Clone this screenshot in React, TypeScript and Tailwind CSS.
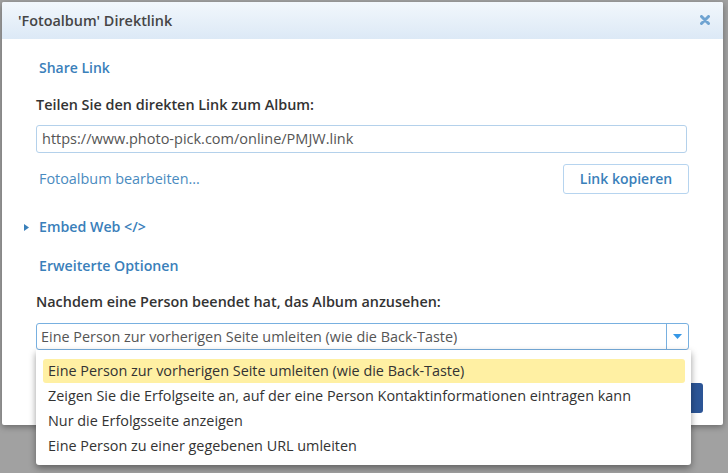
import React from "react";

export default function App() {
  const options = [
    "Eine Person zur vorherigen Seite umleiten (wie die Back-Taste)",
    "Zeigen Sie die Erfolgseite an, auf der eine Person Kontaktinformationen eintragen kann",
    "Nur die Erfolgsseite anzeigen",
    "Eine Person zu einer gegebenen URL umleiten",
  ];
  return (
    <div
      className="w-[728px] h-[473px] bg-[#a1a1a1] overflow-hidden pt-[2px] pl-[2px]"
      style={{ fontFamily: '"Open Sans", "Liberation Sans", sans-serif' }}
    >
      <div className="w-[721px] h-[423px] bg-white rounded-[2px] shadow-[0_2px_6px_rgba(0,0,0,0.35)] flex flex-col">
        <div className="h-[37px] shrink-0 bg-gradient-to-b from-[#f2f7fc] to-[#dce9f6] flex items-center justify-between pl-[16px] pr-[13px] rounded-t-[2px]">
          <span className="text-[14.4px] font-semibold text-[#454545] leading-[20px]">'Fotoalbum' Direktlink</span>
          <svg width="10" height="10" viewBox="0 0 10 10" className="mb-[2px]">
            <path d="M1.5 1.5 L8.5 8.5 M8.5 1.5 L1.5 8.5" stroke="#6fa3d1" strokeWidth="3" strokeLinecap="round" />
          </svg>
        </div>
        <div className="flex flex-col pl-[34px] pr-[34px] text-[14.4px] leading-[20px]">
          <div className="mt-[19px] pl-[3px] text-[14px] font-semibold text-[#3a80ba]">Share Link</div>
          <div className="mt-[17px] font-semibold text-[#333]">Teilen Sie den direkten Link zum Album:</div>
          <div className="mt-[10px] w-[651px] h-[28px] border border-[#b4d1eb] rounded-[3px] flex items-center pl-[5px] text-[14.5px] text-[#555]">
            https://www.photo-pick.com/online/PMJW.link
          </div>
          <div className="mt-[11px] w-[653px] flex items-center justify-between">
            <span className="pl-[3px] text-[#4a8bc0]">Fotoalbum bearbeiten...</span>
            <div className="w-[126px] h-[30px] border border-[#b6d4ef] rounded-[3px] flex items-center justify-center text-[14px] font-semibold text-[#3a80ba]">
              Link kopieren
            </div>
          </div>
          <div className="mt-[23px] flex items-center -ml-[12px]">
            <svg width="5" height="7" viewBox="0 0 5 7" className="mr-[10px]">
              <path d="M0 0 L5 3.5 L0 7 Z" fill="#3a80ba" />
            </svg>
            <span className="text-[14.2px] font-semibold text-[#3a80ba]">Embed Web &lt;/&gt;</span>
          </div>
          <div className="mt-[19px] pl-[3px] text-[14.2px] font-semibold text-[#3a80ba]">Erweiterte Optionen</div>
          <div className="mt-[16px] font-semibold text-[#333]">Nachdem eine Person beendet hat, das Album anzusehen:</div>
          <div className="relative mt-[11px] w-[653px]">
            <div className="h-[27px] border border-[#78b0e0] rounded-[3px] flex items-stretch text-[#555]">
              <div className="flex-1 flex items-center pl-[4px]">
                Eine Person zur vorherigen Seite umleiten (wie die Back-Taste)
              </div>
              <div className="w-[22px] border-l border-[#78b0e0] flex items-center justify-center">
                <svg width="9" height="5" viewBox="0 0 9 5">
                  <path d="M0 0 L9 0 L4.5 5 Z" fill="#3597e6" />
                </svg>
              </div>
            </div>
            <div className="absolute left-0 top-[27px] w-[655px] h-[115px] bg-white rounded-b-[3px] shadow-[0_3px_7px_rgba(0,0,0,0.4)] pt-[9px] pl-[7px] pr-[6px] flex flex-col gap-[1px] z-10">
              {options.map((o, i) => (
                <div
                  key={i}
                  className={
                    i === 0
                      ? "h-[24px] flex items-center pl-[5px] bg-[#fff0a3] rounded-[3px] text-[#333]"
                      : "h-[24px] flex items-center pl-[5px] text-[#333]"
                  }
                >
                  {o}
                </div>
              ))}
            </div>
          </div>
        </div>
        <div className="flex-1" />
        <div className="flex justify-end pr-[20px] pb-[12px]">
          <div className="w-[110px] h-[30px] rounded-[3px] bg-[#2c5596]" />
        </div>
      </div>
    </div>
  );
}
